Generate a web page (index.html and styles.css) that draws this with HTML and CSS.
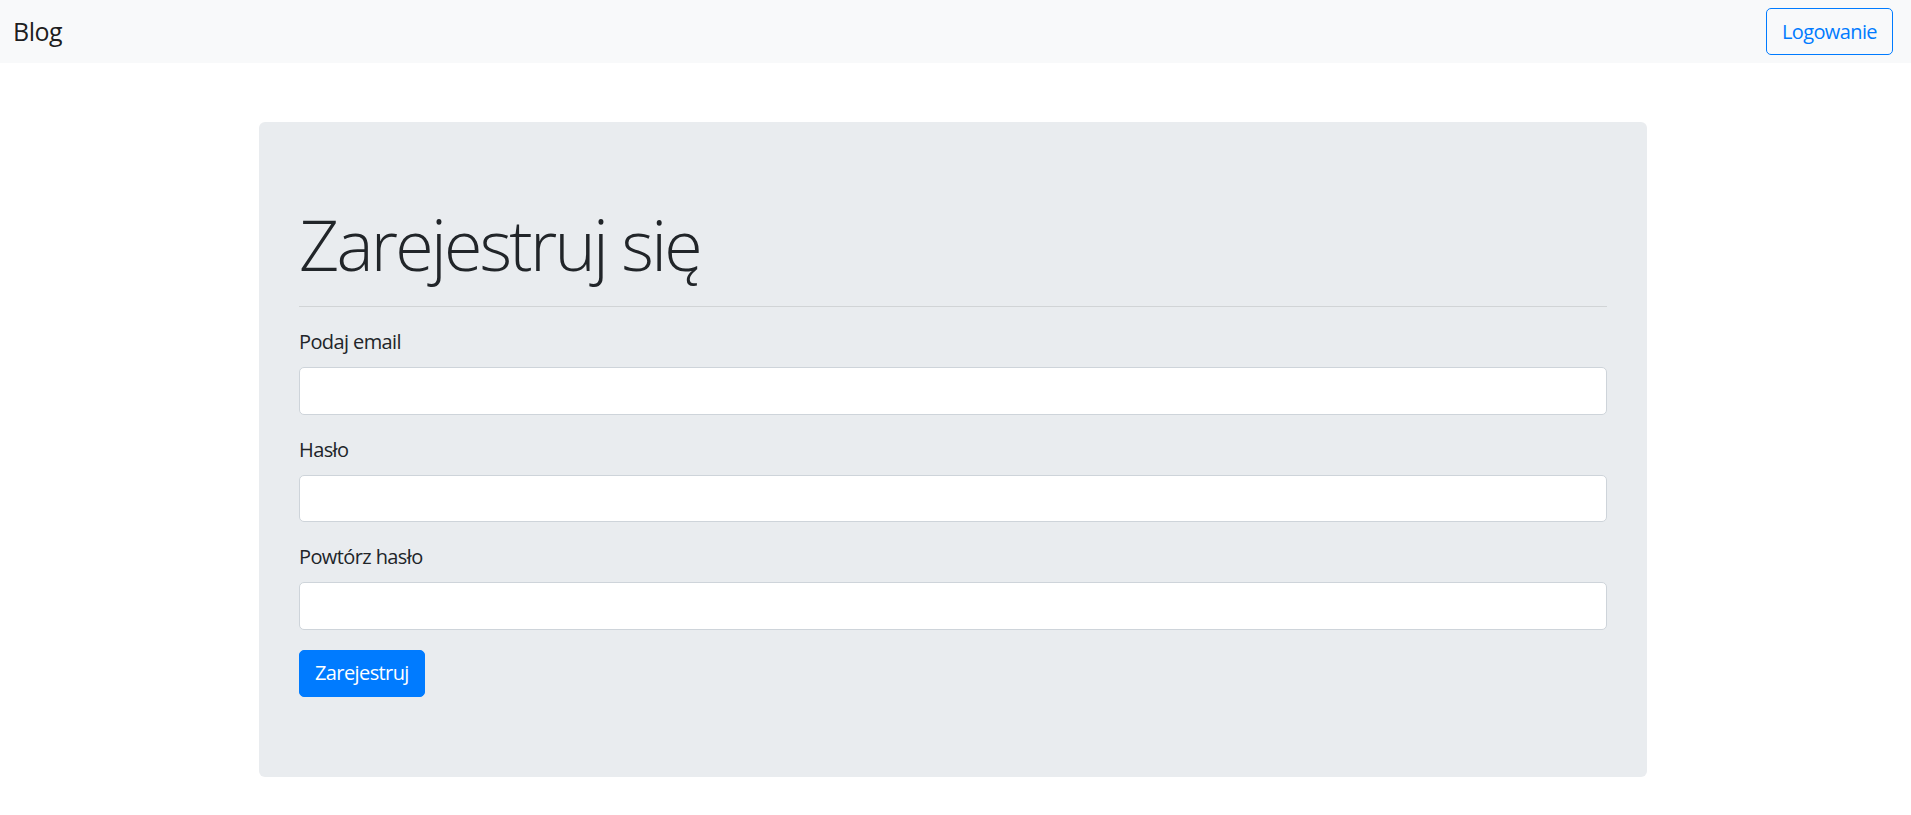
FILE: index.html
```html
<!DOCTYPE html>
<html lang="pl">
<head>
<meta charset="utf-8">
<title>Blog - Rejestracja</title>
<link rel="stylesheet" href="styles.css">
</head>
<body>
<nav class="navbar">
  <a class="brand" href="#">Blog</a>
  <a class="btn btn-outline" href="#">Logowanie</a>
</nav>
<div class="page">
  <main class="container">
    <section class="jumbotron">
      <h1 class="display">Zarejestruj się</h1>
      <hr class="divider">
      <form class="form">
        <div class="form-group">
          <label class="label" for="email">Podaj email</label>
          <input class="input" id="email" type="email">
        </div>
        <div class="form-group">
          <label class="label" for="pass">Hasło</label>
          <input class="input" id="pass" type="password">
        </div>
        <div class="form-group">
          <label class="label" for="pass2">Powtórz hasło</label>
          <input class="input" id="pass2" type="password">
        </div>
        <button class="btn btn-primary" type="submit">Zarejestruj</button>
      </form>
    </section>
  </main>
</div>
</body>
</html>
```
FILE: styles.css
```css
* { box-sizing: border-box; }
html, body { margin: 0; padding: 0; }
body {
  font-family: "Open Sans", "Noto Sans", sans-serif;
  font-size: 20px;
  line-height: 1.5;
  letter-spacing: -0.6px;
  color: #212529;
  background: #fff;
}
.navbar {
  display: flex;
  align-items: center;
  justify-content: space-between;
  height: 63px;
  padding: 0 18px 0 13px;
  background: #f8f9fa;
}
.brand {
  font-size: 25px;
  color: rgba(0,0,0,.9);
  text-decoration: none;
  line-height: 1.5;
  letter-spacing: -0.5px;
}
.btn {
  display: inline-block;
  font-family: inherit;
  font-size: 20px;
  line-height: 1.5;
  letter-spacing: -0.6px;
  padding: 7.5px 15px;
  border: 1.25px solid transparent;
  border-radius: 5px;
  text-decoration: none;
  cursor: pointer;
}
.btn-outline {
  color: #007bff;
  border-color: #007bff;
  background: transparent;
}
.btn-primary {
  color: #fff;
  background: #007bff;
  border-color: #007bff;
}
.page {
  padding-right: 5px;
}
.container {
  width: 1388px;
  margin: 59px auto 0;
}
.jumbotron {
  background: #e9ecef;
  border-radius: 6px;
  padding: 80px 40px;
}
.display {
  font-size: 70px;
  font-weight: 300;
  line-height: 1.2;
  letter-spacing: -2.8px;
  margin: 0 0 10px;
}
.divider {
  margin: 20px 0;
  border: 0;
  border-top: 1.25px solid rgba(0,0,0,.1);
}
.form-group {
  margin-bottom: 20px;
}
.label {
  display: inline-block;
  margin-bottom: 10px;
}
.input {
  display: block;
  width: 100%;
  height: 47.5px;
  padding: 7.5px 15px;
  font-family: inherit;
  font-size: 20px;
  color: #495057;
  background: #fff;
  border: 1.25px solid #ced4da;
  border-radius: 5px;
}
```
